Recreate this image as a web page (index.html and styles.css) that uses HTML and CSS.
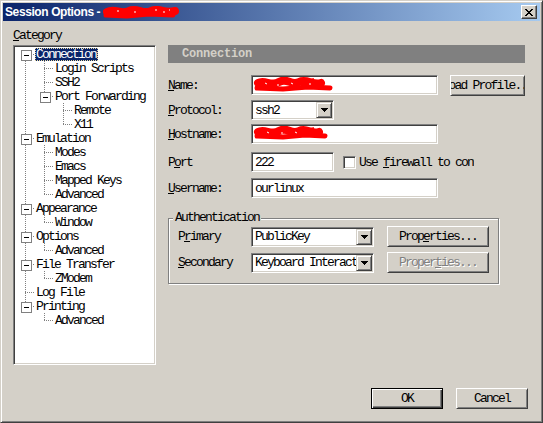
FILE: index.html
```html
<!DOCTYPE html>
<html>
<head>
<meta charset="utf-8">
<title>Session Options</title>
<link rel="stylesheet" href="styles.css">
</head>
<body>
<div class="window">
  <div class="titlebar">
    <span class="title">Session Options - </span>
    <svg class="redact" width="76" height="13" viewBox="0 0 76 13"><path d="M4 6 C 12 2, 18 9, 26 5 S 40 9, 48 5 S 60 8, 72 5" stroke="#f00" stroke-width="8" fill="none" stroke-linecap="round"/><path d="M3 9 L 24 10 L 46 8 L 70 9" stroke="#f00" stroke-width="5" fill="none" stroke-linecap="round"/><path d="M14 5 l2 0 M31 6 l2 0 M52 4 l2 0 M60 6 l2 0 M66 4 l1 0" stroke="#fff" stroke-width="1"/></svg>
    <button class="close" aria-label="Close"><svg width="8" height="7" viewBox="0 0 8 7" shape-rendering="crispEdges"><path d="M0 0h2v1h1v1h2v-1h1v-1h2v1h-1v1h-1v1h-1v1h1v1h1v1h1v1h-2v-1h-1v-1h-2v1h-1v1h-2v-1h1v-1h1v-1h1v-1h-1v-1h-1v-1h-1z" fill="#000"/></svg></button>
  </div>

  <div class="body">
    <div class="cat-label"><u>C</u>ategory</div>

    <div class="tree">
      <div class="node"><span class="g f x"></span><span class="name sel">Connection</span></div>
      <div class="node"><span class="g v"></span><span class="g t"></span><span class="name">Login Scripts</span></div>
      <div class="node"><span class="g v"></span><span class="g t"></span><span class="name">SSH2</span></div>
      <div class="node"><span class="g v"></span><span class="g l x"></span><span class="name">Port Forwarding</span></div>
      <div class="node"><span class="g v"></span><span class="g"></span><span class="g t"></span><span class="name">Remote</span></div>
      <div class="node"><span class="g v"></span><span class="g"></span><span class="g l"></span><span class="name">X11</span></div>
      <div class="node"><span class="g t x"></span><span class="name">Emulation</span></div>
      <div class="node"><span class="g v"></span><span class="g t"></span><span class="name">Modes</span></div>
      <div class="node"><span class="g v"></span><span class="g t"></span><span class="name">Emacs</span></div>
      <div class="node"><span class="g v"></span><span class="g t"></span><span class="name">Mapped Keys</span></div>
      <div class="node"><span class="g v"></span><span class="g l"></span><span class="name">Advanced</span></div>
      <div class="node"><span class="g t x"></span><span class="name">Appearance</span></div>
      <div class="node"><span class="g v"></span><span class="g l"></span><span class="name">Window</span></div>
      <div class="node"><span class="g t x"></span><span class="name">Options</span></div>
      <div class="node"><span class="g v"></span><span class="g l"></span><span class="name">Advanced</span></div>
      <div class="node"><span class="g t x"></span><span class="name">File Transfer</span></div>
      <div class="node"><span class="g v"></span><span class="g l"></span><span class="name">ZModem</span></div>
      <div class="node"><span class="g t"></span><span class="name">Log File</span></div>
      <div class="node"><span class="g l x"></span><span class="name">Printing</span></div>
      <div class="node"><span class="g"></span><span class="g l"></span><span class="name">Advanced</span></div>
    </div>

    <div class="panel">
      <div class="panel-head">Connection</div>

      <div class="frow row-name">
        <label class="lbl"><u>N</u>ame:</label>
        <div class="field w-long"><svg class="redact" width="80" height="16" viewBox="0 0 80 16"><path d="M5 6 C 12 2, 18 10, 26 5 S 38 9, 46 5 S 60 9, 68 6" stroke="#f00" stroke-width="8" fill="none" stroke-linecap="round"/><path d="M4 11 L 30 12 L 55 10 L 77 11" stroke="#f00" stroke-width="5" fill="none" stroke-linecap="round"/><path d="M50 3 l3 -1 M58 3 l3 -1 M66 4 l3 0" stroke="#f00" stroke-width="2"/><path d="M12 6 l2 1 M24 8 l2 0 M38 6 l2 1 M56 7 l2 0" stroke="#fff" stroke-width="1"/></svg></div>
        <button class="btn btn-load"><span>Load Profile...</span></button>
      </div>

      <div class="frow row-proto">
        <label class="lbl"><u>P</u>rotocol:</label>
        <div class="combo w-short"><span class="combo-text">ssh2</span><span class="combo-btn"><svg width="7" height="4" viewBox="0 0 7 4" shape-rendering="crispEdges"><path d="M0 0h7v1h-1v1h-1v1h-1v1h-1v-1h-1v-1h-1v-1h-1z" fill="#000"/></svg></span></div>
      </div>

      <div class="frow row-host">
        <label class="lbl"><u>H</u>ostname:</label>
        <div class="field w-long"><svg class="redact" width="76" height="15" viewBox="0 0 76 15"><path d="M5 6 C 12 2, 18 10, 26 5 S 38 9, 46 5 S 58 9, 66 6" stroke="#f00" stroke-width="8" fill="none" stroke-linecap="round"/><path d="M4 10 L 30 11 L 52 9 L 72 10" stroke="#f00" stroke-width="5" fill="none" stroke-linecap="round"/><path d="M50 3 l3 -1 M58 3 l3 -1" stroke="#f00" stroke-width="2"/><path d="M14 6 l2 1 M28 7 l2 0 M42 6 l2 1" stroke="#fff" stroke-width="1"/></svg></div>
      </div>

      <div class="frow row-port">
        <label class="lbl">P<u>o</u>rt</label>
        <div class="field w-short"><span class="val">222</span></div>
        <div class="check"><span class="box"></span><span class="check-text">Use <u>f</u>irewall to connect</span></div>
      </div>

      <div class="frow row-user">
        <label class="lbl"><u>U</u>sername:</label>
        <div class="field w-long"><span class="val">ourlinux</span></div>
      </div>

      <fieldset class="group">
        <legend>Authentication</legend>
        <div class="frow grow-1">
          <label class="lbl lbl-in">P<u>r</u>imary</label>
          <div class="combo w-mid"><span class="combo-text">PublicKey</span><span class="combo-btn"><svg width="7" height="4" viewBox="0 0 7 4" shape-rendering="crispEdges"><path d="M0 0h7v1h-1v1h-1v1h-1v1h-1v-1h-1v-1h-1v-1h-1z" fill="#000"/></svg></span></div>
          <button class="btn btn-prop">Prop<u>e</u>rties...</button>
        </div>
        <div class="frow grow-2">
          <label class="lbl lbl-in"><u>S</u>econdary</label>
          <div class="combo w-mid"><span class="combo-text">Keyboard Interactive</span><span class="combo-btn"><svg width="7" height="4" viewBox="0 0 7 4" shape-rendering="crispEdges"><path d="M0 0h7v1h-1v1h-1v1h-1v1h-1v-1h-1v-1h-1v-1h-1z" fill="#000"/></svg></span></div>
          <button class="btn btn-prop" disabled>Proper<u>t</u>ies...</button>
        </div>
      </fieldset>
    </div>
  </div>

  <div class="footer">
    <button class="btn btn-default btn-foot">OK</button>
    <button class="btn btn-foot">Cancel</button>
  </div>
</div>
</body>
</html>
```

FILE: styles.css
```css
* { box-sizing: border-box; }
html, body { margin: 0; padding: 0; }
body {
  background: #D4D0C8;
  font-family: "Liberation Mono", "Courier New", monospace;
  font-size: 13px;
  letter-spacing: -1.8px;
  color: #000;
}
u { text-underline-offset: 1px; }

.window {
  width: 543px;
  height: 423px;
  border: 1px solid;
  border-color: #D4D0C8 #404040 #404040 #D4D0C8;
  box-shadow: inset 1px 1px #fff, inset -1px -1px #808080;
  padding: 2px;
  background: #D4D0C8;
  display: flex;
  flex-direction: column;
}

/* title bar */
.titlebar {
  flex: none;
  height: 18px;
  display: flex;
  align-items: center;
  padding: 0 3px 0 2px;
  background: linear-gradient(to right, #0A246A, #A6CAF0);
}
.title {
  font-family: "Liberation Sans", Arial, sans-serif;
  font-weight: bold;
  font-size: 12px;
  letter-spacing: -0.4px;
  color: #fff;
  white-space: pre;
}
.redact { display: block; flex: none; }
.close {
  margin-left: auto;
  width: 16px;
  height: 14px;
  padding: 0;
  display: flex;
  align-items: center;
  justify-content: center;
  background: #D4D0C8;
  border: 1px solid;
  border-color: #fff #404040 #404040 #fff;
  box-shadow: inset -1px -1px #808080;
}

/* body */
.body {
  display: grid;
  grid-template-columns: 143px 357px;
  grid-template-rows: 14px 320px;
  row-gap: 3px;
  column-gap: 12px;
  padding: 7px 0 0 10px;
}
.cat-label { grid-column: 1; grid-row: 1; line-height: 15px; }

/* tree */
.tree {
  grid-column: 1;
  grid-row: 2;
  background: #fff;
  border: 1px solid;
  border-color: #808080 #fff #fff #808080;
  box-shadow: inset 1px 1px #404040, inset -1px -1px #D4D0C8;
  padding: 1px 0 0 2px;
  overflow: hidden;
}
.node { display: flex; height: 14px; white-space: nowrap; }
.g { flex: none; width: 19px; height: 14px; position: relative; }
.g.t, .g.l, .g.f {
  background: repeating-linear-gradient(to right, #808080 0 1px, transparent 1px 2px) 9px 7px / 10px 1px no-repeat;
}
.g.v::before, .g.t::before, .g.l::before, .g.f::before {
  content: "";
  position: absolute;
  left: 9px;
  width: 1px;
  top: 0;
  bottom: 0;
  background: repeating-linear-gradient(#808080 0 1px, transparent 1px 2px);
}
.g.l::before { bottom: 7px; }
.g.f::before { top: 8px; }
.g.x::after {
  content: "";
  position: absolute;
  left: 5px;
  top: 3px;
  width: 9px;
  height: 9px;
  border: 1px solid #808080;
  background: linear-gradient(#000, #000) center / 5px 1px no-repeat, #fff;
}
.name {
  height: 13px;
  margin-top: 1px;
  line-height: 14px;
  padding: 0 2px 0 1px;
}
.name.sel {
  background: #0A246A;
  color: #fff;
  outline: 1px dotted #E8D9A0;
  outline-offset: -1px;
}

/* right panel */
.panel { grid-column: 2; grid-row: 2; display: flex; flex-direction: column; }
.panel-head {
  height: 18px;
  line-height: 18px;
  background: #808080;
  color: #D4D0C8;
  font-weight: bold;
  font-size: 12px;
  letter-spacing: -0.2px;
  padding-left: 14px;
}
.frow { display: flex; align-items: center; height: 20px; }
.row-name { margin-top: 12px; height: 21px; align-items: flex-start; }
.row-proto { margin-top: 4px; }
.row-host { margin-top: 4px; }
.row-port { margin-top: 8px; }
.row-user { margin-top: 6px; }
.lbl { flex: none; width: 83px; line-height: 21px; }
.lbl-in { width: 73px; }

.field, .combo {
  flex: none;
  height: 20px;
  background: #fff;
  border: 1px solid;
  border-color: #808080 #fff #fff #808080;
  box-shadow: inset 1px 1px #404040, inset -1px -1px #D4D0C8;
  padding: 1px 1px 1px 2px;
  display: flex;
  align-items: center;
  overflow: hidden;
  white-space: nowrap;
}
.w-long { width: 187px; }
.w-short { width: 83px; }
.w-mid { width: 123px; }
.field .redact { margin-left: -1px; align-self: flex-start; }
.val { line-height: 15px; padding-left: 1px; }

.combo { padding: 1px; }
.combo-text { flex: 1; min-width: 0; overflow: hidden; padding-left: 2px; line-height: 15px; }
.combo-btn {
  flex: none;
  width: 16px;
  height: 16px;
  background: #D4D0C8;
  border: 1px solid;
  border-color: #D4D0C8 #404040 #404040 #D4D0C8;
  box-shadow: inset 1px 1px #fff, inset -1px -1px #808080;
  display: flex;
  align-items: center;
  justify-content: center;
}

.check { display: flex; align-items: center; margin-left: 9px; width: 131px; overflow: hidden; white-space: nowrap; }
.box {
  flex: none;
  width: 13px;
  height: 13px;
  background: #fff;
  border: 1px solid;
  border-color: #808080 #fff #fff #808080;
  box-shadow: inset 1px 1px #404040, inset -1px -1px #D4D0C8;
}
.check-text { margin-left: 3px; }

/* buttons */
.btn {
  font: inherit;
  letter-spacing: inherit;
  color: #000;
  height: 21px;
  padding: 0;
  background: #D4D0C8;
  border: 1px solid;
  border-color: #fff #404040 #404040 #fff;
  box-shadow: inset 1px 1px #D4D0C8, inset -1px -1px #808080;
  display: flex;
  align-items: center;
  justify-content: center;
  white-space: nowrap;
  overflow: hidden;
}
.btn-load { width: 75px; margin-left: 12px; flex: none; }
.btn-load span { flex: none; }
.btn-prop { width: 102px; margin-left: 13px; flex: none; }
.btn:disabled { color: #808080; text-shadow: 1px 1px 0 #fff; }
.btn-default {
  border-color: #000;
  box-shadow: inset 1px 1px #fff, inset -1px -1px #404040, inset -2px -2px #808080;
}

/* group box */
.group {
  margin: 13px 0 0;
  padding: 1px 0 10px 9px;
  width: 331px;
  min-width: 0;
  border: 1px solid #808080;
  box-shadow: inset 1px 1px #fff, 1px 1px #fff;
}
.group legend {
  padding: 0 2px;
  margin-left: -5px;
  line-height: 14px;
  background: #D4D0C8;
}
.grow-1 { height: 21px; }
.grow-2 { height: 21px; margin-top: 5px; }

/* footer */
.footer {
  display: flex;
  justify-content: flex-end;
  gap: 13px;
  margin-top: 23px;
  padding-right: 12px;
}
.btn-foot { width: 72px; }
```
